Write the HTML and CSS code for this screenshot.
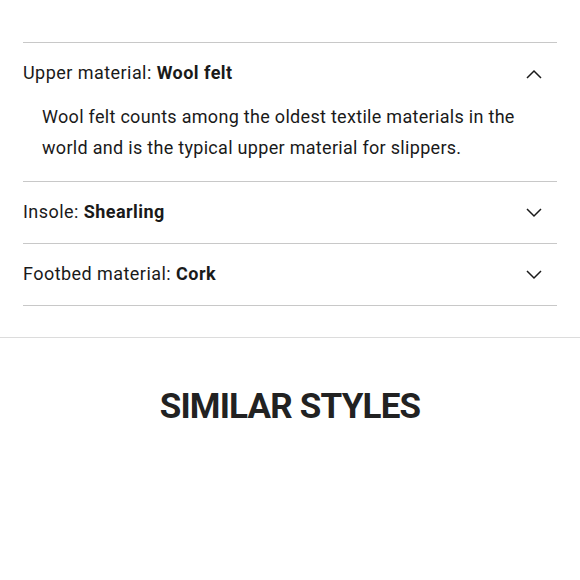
FILE: index.html
```html
<!DOCTYPE html>
<html>
<head>
<meta charset="utf-8">
<link rel="stylesheet" href="styles.css">
</head>
<body>
<div class="details">
  <div class="item open">
    <div class="head">
      <span class="label">Upper material: <b>Wool felt</b></span>
      <svg class="chev" width="16" height="10" viewBox="0 0 16 10"><polyline points="1,9 8,2 15,9" fill="none" stroke="#1a1a1a" stroke-width="1.5"/></svg>
    </div>
    <div class="body">Wool felt counts among the oldest textile materials in the world and is the typical upper material for slippers.</div>
  </div>
  <div class="item">
    <div class="head">
      <span class="label">Insole: <b>Shearling</b></span>
      <svg class="chev" width="16" height="10" viewBox="0 0 16 10"><polyline points="1,1 8,8 15,1" fill="none" stroke="#1a1a1a" stroke-width="1.5"/></svg>
    </div>
  </div>
  <div class="item last">
    <div class="head">
      <span class="label">Footbed material: <b>Cork</b></span>
      <svg class="chev" width="16" height="10" viewBox="0 0 16 10"><polyline points="1,1 8,8 15,1" fill="none" stroke="#1a1a1a" stroke-width="1.5"/></svg>
    </div>
  </div>
</div>
<div class="similar">
  <h2>SIMILAR STYLES</h2>
</div>
</body>
</html>
```
FILE: styles.css
```css
html, body { margin: 0; padding: 0; background: #fff; }
body { font-family: Roboto, "Liberation Sans", sans-serif; color: #1a1a1a; }
.details { padding: 42px 23px 0; }
.item { border-top: 1px solid #c8c8c8; }
.item.last { border-bottom: 1px solid #c8c8c8; }
.head { height: 61px; display: flex; align-items: center; justify-content: space-between; padding-right: 15px; }
.label { font-size: 18px; letter-spacing: 0.45px; padding-bottom: 2px; }
.label b { font-weight: 700; }
.chev { display: block; }
.body { font-size: 18px; line-height: 31px; margin-top: -3px; padding: 0 30px 18px 19px; letter-spacing: 0.3px; }
.similar { margin-top: 31px; border-top: 1px solid #dcdcdc; padding-top: 48px; text-align: center; }
.similar h2 { margin: 0; font-size: 35px; line-height: 42px; font-weight: 700; color: #222; letter-spacing: -0.8px; }
```
